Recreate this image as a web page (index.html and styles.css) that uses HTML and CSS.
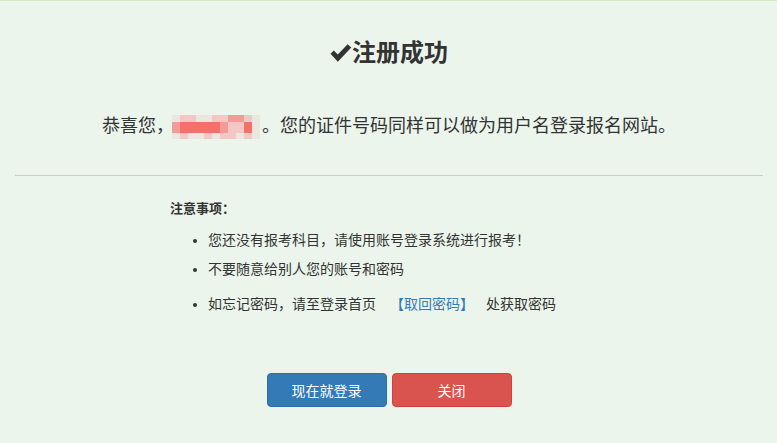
FILE: index.html
```html
<!DOCTYPE html>
<html lang="zh-CN">
<head>
    <meta charset="UTF-8">
    <title>注册成功</title>
    <link rel="stylesheet" href="styles.css">
</head>
<body>
    <div class="container">
        <h2 class="title">
            <svg class="ok-icon" viewBox="0 0 22 20" width="22" height="20"><path d="M0.5 10.8 L3.8 7.5 L7.8 11.4 L17.6 1.2 L21.3 4.6 L7.8 18.8 Z" fill="#333"/></svg>注册成功
        </h2>
        <p class="welcome">恭喜您，<span class="mosaic"><span class="cell c0"></span><span class="cell c1"></span><span class="cell c1"></span><span class="cell c0"></span><span class="cell c0"></span><span class="cell c1"></span><span class="cell c1"></span><span class="cell c2"></span><span class="cell c2"></span><span class="cell c1"></span><span class="cell c0"></span><span class="cell c2"></span><span class="cell c3"></span><span class="cell c3"></span><span class="cell c3"></span><span class="cell c3"></span><span class="cell c3"></span><span class="cell c2"></span><span class="cell c1"></span><span class="cell c1"></span><span class="cell c3"></span><span class="cell c0"></span><span class="cell c0"></span><span class="cell c1"></span><span class="cell c0"></span><span class="cell c0"></span><span class="cell c1"></span><span class="cell c0"></span><span class="cell c1"></span><span class="cell c1"></span><span class="cell c0"></span><span class="cell c1"></span><span class="cell c0"></span></span>。您的证件号码同样可以做为用户名登录报名网站。</p>
        <hr>
        <div class="notes">
            <div class="notes-title">注意事项：</div>
            <ul>
                <li>您还没有报考科目，请使用账号登录系统进行报考！</li>
                <li>不要随意给别人您的账号和密码</li>
                <li>如忘记密码，请至登录首页<a class="btn-link" href="#">【取回密码】</a>处获取密码</li>
            </ul>
        </div>
        <div class="actions">
            <button class="btn btn-primary">现在就登录</button>
            <button class="btn btn-danger">关闭</button>
        </div>
    </div>
</body>
</html>
```

FILE: styles.css
```css
html, body {
    height: 100%;
}
body {
    margin: 0;
    background: #ebf5ec;
    border-top: 1px solid #d6e9c6;
    box-sizing: border-box;
    font-family: "Liberation Sans", "Noto Sans CJK SC", sans-serif;
    font-size: 14px;
    color: #333;
}
.container {
    padding: 0 14px 0 15px;
}
.title {
    margin: 0;
    padding-top: 34px;
    font-size: 24px;
    font-weight: bold;
    text-align: center;
    line-height: 36px;
    height: 36px;
}
.ok-icon {
    vertical-align: -2px;
}
.welcome {
    margin: 43px 0 0;
    font-size: 18px;
    line-height: 24px;
    text-align: center;
}
.mosaic {
    display: inline-grid;
    grid-template-columns: repeat(11, 8px);
    grid-template-rows: 7px 11px 6px;
    vertical-align: middle;
    margin: 0 2px 0 -2px;
}
.cell.c0 { background: #ece6df; }
.cell.c1 { background: #f3c8c4; }
.cell.c2 { background: #f39c97; }
.cell.c3 { background: #f3706b; }
hr {
    margin: 36px 0 0;
    border: 0;
    border-top: 1px solid #ccc;
}
.notes {
    padding: 24px 0 0 155px;
}
.notes-title {
    font-size: 13px;
    font-weight: bold;
    line-height: 18px;
}
.notes ul {
    margin: 12px 0 0;
    padding-left: 38px;
}
.notes li {
    line-height: 20px;
    margin-bottom: 9px;
}
.btn-link {
    display: inline-block;
    padding: 6px 12px 6px 14px;
    color: #337ab7;
    text-decoration: none;
}
.actions {
    display: flex;
    justify-content: center;
    gap: 5px;
    margin-top: 53px;
}
.btn {
    width: 120px;
    height: 34px;
    border-radius: 4px;
    border: 1px solid transparent;
    color: #fff;
    font-family: inherit;
    font-size: 14px;
    cursor: pointer;
}
.btn-primary {
    background: #337ab7;
    border-color: #2e6da4;
}
.btn-danger {
    background: #d9534f;
    border-color: #d43f3a;
}
```
